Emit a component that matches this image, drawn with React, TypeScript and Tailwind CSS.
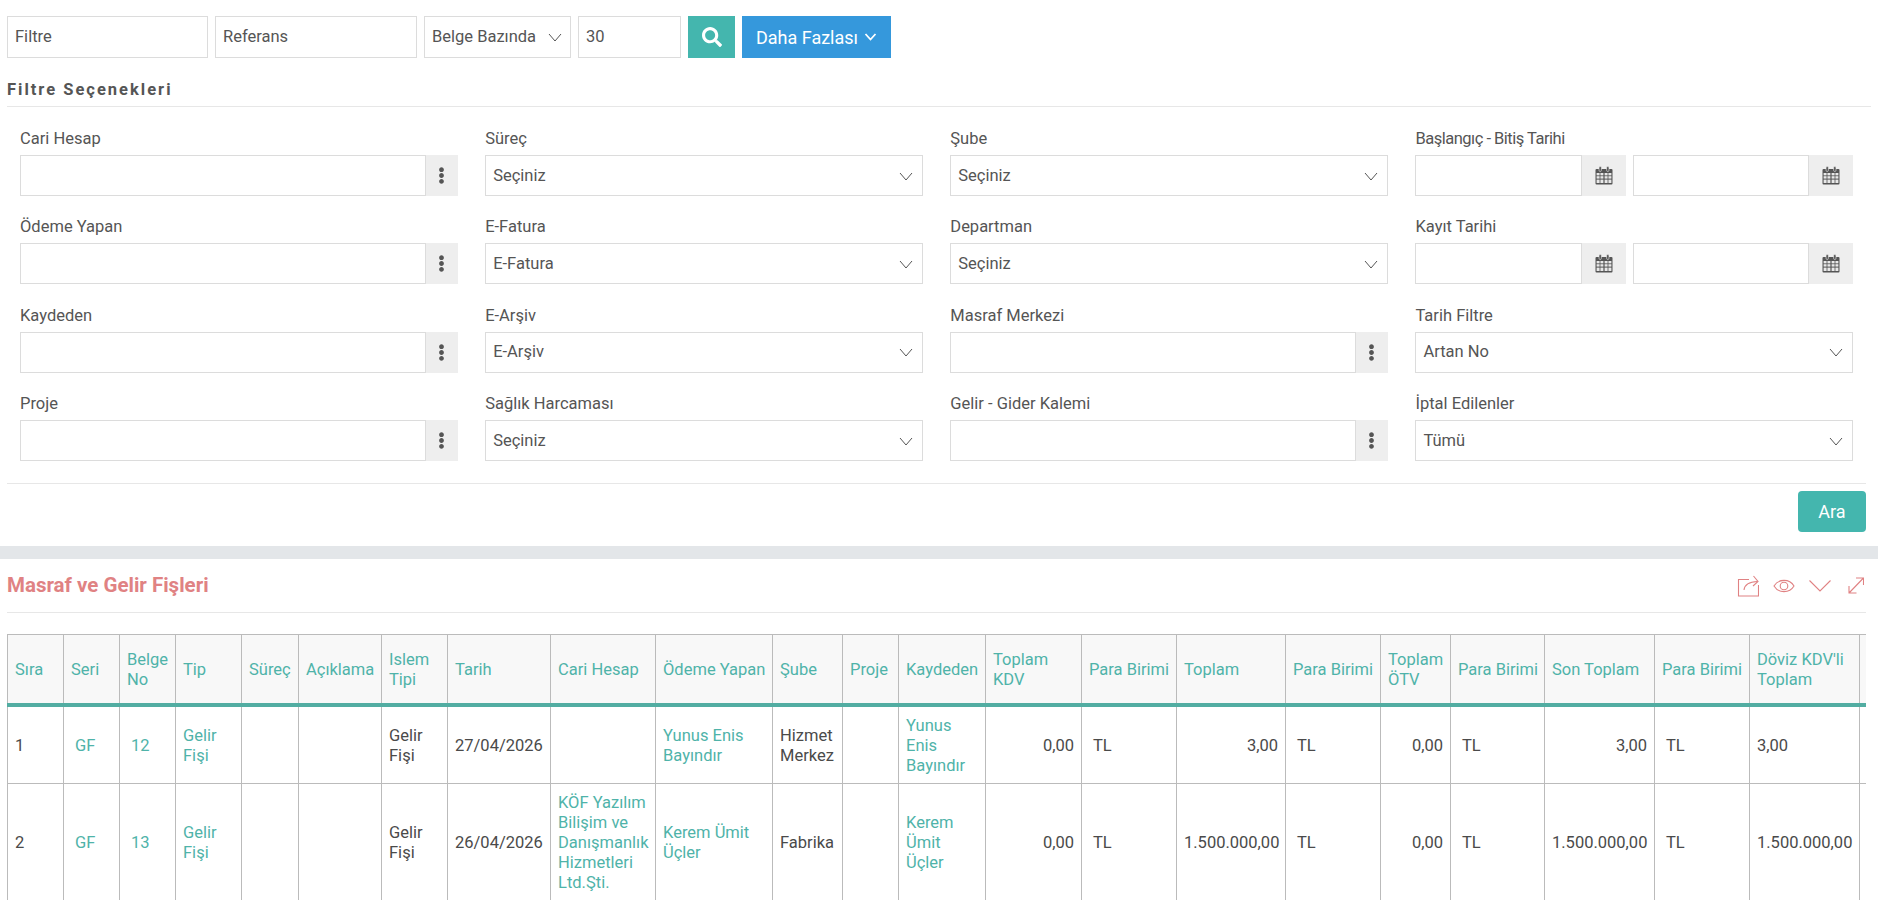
import { FaSearch, FaEllipsisV } from "react-icons/fa";

const Chevron = ({ className = "" }: { className?: string }) => (
  <svg viewBox="0 0 14 9" fill="none" stroke="currentColor" strokeWidth="1" className={className}>
    <polyline points="1,1 7,8 13,1" />
  </svg>
);

const CalendarIcon = () => (
  <svg viewBox="0 0 18 19" className="w-[18px] h-[19px] text-[#555]" fill="currentColor">
    <rect x="0.5" y="3" width="17" height="15.5" rx="1" />
    <rect x="4" y="0.5" width="2.4" height="5" rx="1.2" stroke="#eeeeee" strokeWidth="0.6" />
    <rect x="11.6" y="0.5" width="2.4" height="5" rx="1.2" stroke="#eeeeee" strokeWidth="0.6" />
    <g fill="#e8e8e8">
      <rect x="1.6" y="7" width="3" height="2.4" /><rect x="5.4" y="7" width="3" height="2.4" /><rect x="9.6" y="7" width="3" height="2.4" /><rect x="13.4" y="7" width="3" height="2.4" />
      <rect x="1.6" y="10.2" width="3" height="2.4" /><rect x="5.4" y="10.2" width="3" height="2.4" /><rect x="9.6" y="10.2" width="3" height="2.4" /><rect x="13.4" y="10.2" width="3" height="2.4" />
      <rect x="1.6" y="13.6" width="3" height="3.4" /><rect x="5.4" y="13.6" width="3" height="3.4" /><rect x="9.6" y="13.6" width="3" height="3.4" /><rect x="13.4" y="13.6" width="3" height="3.4" />
    </g>
  </svg>
);

const Label = ({ text, tight }: { text: string; tight?: boolean }) => (
  <div className={`h-[20px] mb-[7px] text-[16.5px] leading-[22px] text-[#555] ${tight ? "tracking-[-0.5px]" : ""}`}>{text}</div>
);

const SelectBox = ({ label, value }: { label: string; value: string }) => (
  <div>
    <Label text={label} />
    <div className="h-[41px] border border-[#dcdcdc] flex items-center justify-between pt-[1px] pl-[7px] pr-[9px] text-[16.5px] text-[#555]">
      <span>{value}</span>
      <Chevron className="w-[14px] h-[9px] text-[#555]" />
    </div>
  </div>
);

const LookupBox = ({ label }: { label: string }) => (
  <div>
    <Label text={label} />
    <div className="h-[41px] flex">
      <input className="flex-1 min-w-0 border border-[#dcdcdc] outline-none" />
      <div className="w-[32px] bg-[#eeeeee] flex items-center justify-center text-[#555]">
        <FaEllipsisV className="text-[17px]" />
      </div>
    </div>
  </div>
);

const DateBox = ({ label, tight }: { label: string; tight?: boolean }) => (
  <div>
    <Label text={label} tight={tight} />
    <div className="h-[41px] flex gap-[7px]">
      <div className="flex w-[211px]">
        <input className="flex-1 min-w-0 border border-[#dcdcdc] outline-none" />
        <div className="w-[44px] bg-[#eeeeee] flex items-center justify-center"><CalendarIcon /></div>
      </div>
      <div className="flex flex-1 min-w-0">
        <input className="flex-1 min-w-0 border border-[#dcdcdc] outline-none" />
        <div className="w-[44px] bg-[#eeeeee] flex items-center justify-center"><CalendarIcon /></div>
      </div>
    </div>
  </div>
);

const colWidths = [
  "w-[56px]", "w-[56px]", "w-[56px]", "w-[66px]", "w-[57px]", "w-[83px]", "w-[66px]", "w-[103px]",
  "w-[105px]", "w-[117px]", "w-[70px]", "w-[56px]", "w-[87px]", "w-[96px]", "w-[95px]", "w-[109px]",
  "w-[95px]", "w-[70px]", "w-[94px]", "w-[110px]", "w-[95px]", "w-[110px]", "w-[110px]",
];

const headers = [
  "Sıra", "Seri", "Belge No", "Tip", "Süreç", "Açıklama", "Islem Tipi", "Tarih", "Cari Hesap", "Ödeme Yapan", "Şube", "Proje",
  "Kaydeden", "Toplam KDV", "Para Birimi", "Toplam", "Para Birimi", "Toplam ÖTV", "Para Birimi", "Son Toplam", "Para Birimi", "Döviz KDV'li Toplam", "",
];

type RowData = { no: string; belge: string; tarih: string; cari: string; odeme: string; sube: string; kaydeden: string; toplam: string };

const rows: RowData[] = [
  { no: "1", belge: "12", tarih: "27/04/2026", cari: "", odeme: "Yunus Enis Bayındır", sube: "Hizmet Merkez", kaydeden: "Yunus Enis Bayındır", toplam: "3,00" },
  { no: "2", belge: "13", tarih: "26/04/2026", cari: "KÖF Yazılım Bilişim ve Danışmanlık Hizmetleri Ltd.Şti.", odeme: "Kerem Ümit Üçler", sube: "Fabrika", kaydeden: "Kerem Ümit Üçler", toplam: "1.500.000,00" },
];

const td = "border border-[#bbbbbb] px-[7px] pt-[9px] pb-[7px] align-middle";
const link = "text-[#4fb3a9]";

export default function App() {
  return (
    <div className="h-screen overflow-hidden bg-white font-['Roboto',sans-serif] text-[16.5px] text-[#4a4a4a]">
      <div className="px-[7px] pt-[16px]">
        <div className="flex gap-[7px] h-[42px]">
          <input placeholder="Filtre" className="w-[201px] border border-[#dcdcdc] pt-[1px] px-[7px] outline-none placeholder:text-[#555]" />
          <input placeholder="Referans" className="w-[202px] border border-[#dcdcdc] pt-[1px] px-[7px] outline-none placeholder:text-[#555]" />
          <div className="w-[147px] border border-[#dcdcdc] flex items-center justify-between pt-[1px] pl-[7px] pr-[8px] text-[#555]">
            <span>Belge Bazında</span>
            <Chevron className="w-[14px] h-[9px]" />
          </div>
          <input defaultValue="30" className="w-[103px] border border-[#dcdcdc] pt-[1px] px-[7px] outline-none text-[#555]" />
          <button className="w-[47px] bg-[#44b6ae] text-white flex items-center justify-center"><FaSearch className="text-[20px]" /></button>
          <button className="w-[149px] bg-[#3598dc] text-white text-[18px] flex items-center justify-center gap-[6px]">
            Daha Fazlası
            <svg viewBox="0 0 12 8" className="w-[13px] h-[8px]" fill="none" stroke="currentColor" strokeWidth="1.8"><polyline points="1,1 6,6.5 11,1" /></svg>
          </button>
        </div>

        <div className="mt-[22px] pb-[6px] border-b border-[#e7e7e7] text-[16.5px] leading-[20px] font-bold tracking-[2px] text-[#555]">Filtre Seçenekleri</div>

        <div className="grid grid-cols-4 gap-x-[27.6px] gap-y-[20.4px] pl-[13px] pr-[18px] pt-[21px]">
          <LookupBox label="Cari Hesap" />
          <SelectBox label="Süreç" value="Seçiniz" />
          <SelectBox label="Şube" value="Seçiniz" />
          <DateBox label="Başlangıç - Bitiş Tarihi" tight />
          <LookupBox label="Ödeme Yapan" />
          <SelectBox label="E-Fatura" value="E-Fatura" />
          <SelectBox label="Departman" value="Seçiniz" />
          <DateBox label="Kayıt Tarihi" />
          <LookupBox label="Kaydeden" />
          <SelectBox label="E-Arşiv" value="E-Arşiv" />
          <LookupBox label="Masraf Merkezi" />
          <SelectBox label="Tarih Filtre" value="Artan No" />
          <LookupBox label="Proje" />
          <SelectBox label="Sağlık Harcaması" value="Seçiniz" />
          <LookupBox label="Gelir - Gider Kalemi" />
          <SelectBox label="İptal Edilenler" value="Tümü" />
        </div>

        <div className="mt-[22px] border-t border-[#e7e7e7] pt-[7px] mr-[5px] flex justify-end">
          <button className="w-[68px] h-[41px] rounded-[4px] bg-[#44b6ae] text-white text-[18px]">Ara</button>
        </div>
      </div>

      <div className="mt-[14px] h-[13px] bg-[#e3e6e9]" />

      <div className="px-[7px]">
        <div className="mr-[5px] h-[54px] border-b border-[#e7e7e7] flex items-center justify-between">
          <h2 className="text-[20.5px] font-bold text-[#e08283]">Masraf ve Gelir Fişleri</h2>
          <div className="flex items-center gap-[14px] pr-[2px] text-[#e08283]">
            <svg viewBox="0 0 22 22" className="w-[22px] h-[22px]" fill="none" stroke="currentColor" strokeWidth="1.1">
              <path d="M12 4.5H1.5V21H21.5V10" />
              <path d="M7 15c.5-5 4-8 13.5-8.500" />
              <polyline points="16.5,1 21,6.500 16,11" />
            </svg>
            <svg viewBox="0 0 22 14" className="w-[22px] h-[14px]" fill="none" stroke="currentColor" strokeWidth="1.1">
              <path d="M1 7c4.500-7.500 15.500-7.500 20 0c-4.500 7.500-15.500 7.500-20 0z" />
              <circle cx="11" cy="7" r="3.800" />
            </svg>
            <svg viewBox="0 0 22 12" className="w-[22px] h-[12px]" fill="none" stroke="currentColor" strokeWidth="1.1">
              <polyline points="0.500,0.500 11,11 21.500,0.500" />
            </svg>
            <svg viewBox="0 0 16 17" className="ml-[3px] w-[16px] h-[17px]" fill="none" stroke="currentColor" strokeWidth="1.1">
              <path d="M1 16L15 1.500M8 1H15.500V8M1 9V16H8.500" />
            </svg>
          </div>
        </div>

        <div className="mr-[5px] mt-[21px] overflow-hidden">
          <table className="table-fixed border-collapse w-[1963px] text-[16.5px] leading-[20px]">
            <colgroup>
              {colWidths.map((c, i) => <col key={i} className={c} />)}
            </colgroup>
            <thead>
              <tr className="bg-[#f8f8f8]">
                {headers.map((h, i) => (
                  <th key={i} className="h-[70px] border border-[#bbbbbb] border-b-[4px] border-b-[#52ada2] pt-[2px] pl-[7px] pr-[3px] font-normal text-left align-middle text-[#4fb3a9]">{h}</th>
                ))}
              </tr>
            </thead>
            <tbody>
              {rows.map((r) => (
                <tr key={r.no}>
                  <td className={td}>{r.no}</td>
                  <td className={`${td} pl-[11px] ${link}`}>GF</td>
                  <td className={`${td} pl-[11px] ${link}`}>{r.belge}</td>
                  <td className={`${td} ${link}`}>Gelir Fişi</td>
                  <td className={td}></td>
                  <td className={td}></td>
                  <td className={td}>Gelir Fişi</td>
                  <td className={td}>{r.tarih}</td>
                  <td className={`${td} ${link}`}>{r.cari}</td>
                  <td className={`${td} ${link}`}>{r.odeme}</td>
                  <td className={td}>{r.sube}</td>
                  <td className={td}></td>
                  <td className={`${td} ${link}`}>{r.kaydeden}</td>
                  <td className={`${td} text-right`}>0,00</td>
                  <td className={`${td} pl-[11px]`}>TL</td>
                  <td className={`${td} text-right`}>{r.toplam}</td>
                  <td className={`${td} pl-[11px]`}>TL</td>
                  <td className={`${td} text-right`}>0,00</td>
                  <td className={`${td} pl-[11px]`}>TL</td>
                  <td className={`${td} text-right`}>{r.toplam}</td>
                  <td className={`${td} pl-[11px]`}>TL</td>
                  <td className={td}>{r.toplam}</td>
                  <td className={td}></td>
                </tr>
              ))}
            </tbody>
          </table>
        </div>
      </div>
    </div>
  );
}
